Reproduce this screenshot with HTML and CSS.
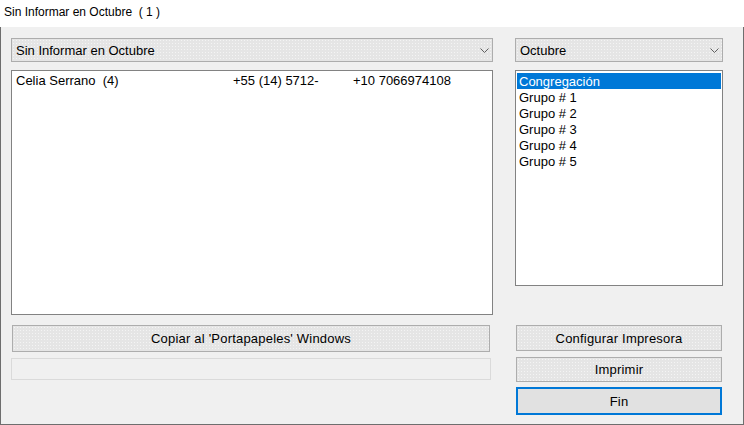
FILE: index.html
```html
<!DOCTYPE html>
<html lang="es">
<head>
    <meta charset="UTF-8">
    <title>Sin Informar en Octubre</title>
    <link rel="stylesheet" href="styles.css">
</head>
<body>
    <div class="window">
        <div class="titlebar">Sin Informar en Octubre  ( 1 )</div>
        <div class="content">
            <div class="col-left">
                <div class="combo">
                    <span>Sin Informar en Octubre</span>
                    <svg class="chev" width="9" height="5" viewBox="0 0 9 5"><path d="M0.5 0.5 L4.5 4.5 L8.5 0.5" fill="none" stroke="#606060" stroke-width="1"/></svg>
                </div>
                <div class="listbox main-list">
                    <div class="row">
                        <span class="c-name">Celia Serrano  (4)</span>
                        <span class="c-tel">+55 (14) 5712-</span>
                        <span class="c-cel">+10 7066974108</span>
                    </div>
                </div>
                <button class="btn btn-copy">Copiar al 'Portapapeles' Windows</button>
                <div class="progress"></div>
            </div>
            <div class="col-right">
                <div class="combo">
                    <span>Octubre</span>
                    <svg class="chev" width="9" height="5" viewBox="0 0 9 5"><path d="M0.5 0.5 L4.5 4.5 L8.5 0.5" fill="none" stroke="#606060" stroke-width="1"/></svg>
                </div>
                <div class="listbox group-list">
                    <div class="item selected">Congregación</div>
                    <div class="item">Grupo # 1</div>
                    <div class="item">Grupo # 2</div>
                    <div class="item">Grupo # 3</div>
                    <div class="item">Grupo # 4</div>
                    <div class="item">Grupo # 5</div>
                </div>
                <div class="buttons">
                    <button class="btn btn-config">Configurar Impresora</button>
                    <button class="btn btn-print">Imprimir</button>
                    <button class="btn btn-fin">Fin</button>
                </div>
            </div>
        </div>
    </div>
</body>
</html>
```

FILE: styles.css
```css
* {
    box-sizing: border-box;
}
body {
    margin: 0;
    width: 744px;
    height: 425px;
    overflow: hidden;
    font-family: "Liberation Sans", Arial, sans-serif;
    font-size: 13px;
    color: #000;
    background: #fff;
}
.window {
    width: 744px;
    height: 425px;
    display: flex;
    flex-direction: column;
}
.titlebar {
    height: 27px;
    background: #fff;
    padding: 5px 0 0 4px;
    font-size: 12px;
    white-space: pre;
}
.content {
    flex: 1;
    background: #f0f0f0;
    border-left: 1px solid #6e6e6e;
    border-right: 1px solid #6e6e6e;
    border-bottom: 1px solid #6e6e6e;
    padding: 11px 20px 0 10px;
    display: flex;
    gap: 22px;
}
.col-left {
    width: 482px;
    display: flex;
    flex-direction: column;
}
.col-right {
    width: 208px;
    display: flex;
    flex-direction: column;
}
.combo {
    height: 24px;
    border: 1px solid #adadad;
    background-color: #e5e5e5;
    background-image: radial-gradient(circle, #f4f4f4 0.6px, transparent 0.9px);
    background-size: 3px 3px;
    display: flex;
    align-items: center;
    justify-content: space-between;
    padding: 0 3px 0 4px;
    white-space: pre;
}
.chev {
    display: block;
    margin-top: 1px;
}
.listbox {
    margin-top: 8px;
    background: #fff;
    border: 1px solid #828282;
    padding: 2px 1px;
}
.main-list {
    height: 245px;
}
.group-list {
    height: 216px;
    padding-top: 2px;
}
.row {
    display: flex;
    height: 16px;
    line-height: 16px;
    padding-left: 3px;
    white-space: pre;
}
.c-name {
    width: 217px;
}
.c-tel {
    width: 120px;
}
.item {
    height: 16px;
    line-height: 17px;
    padding-left: 2px;
}
.item.selected {
    background: #0078d7;
    color: #fff;
}
.btn {
    font-family: inherit;
    font-size: 13px;
    letter-spacing: 0.2px;
    color: #000;
    border: 1px solid #adadad;
    background-color: #e5e5e5;
    background-image: radial-gradient(circle, #f4f4f4 0.6px, transparent 0.9px);
    background-size: 3px 3px;
    padding: 0;
    margin: 0;
}
.btn-copy {
    margin: 10px 3px 0 1px;
    height: 27px;
}
.progress {
    margin: 6px 2px 0 0;
    height: 22px;
    border: 1px solid #dadada;
}
.buttons {
    margin-top: 39px;
    padding: 0 1px;
    display: flex;
    flex-direction: column;
}
.btn-config {
    height: 26px;
}
.btn-print {
    height: 25px;
    margin-top: 6px;
}
.btn-fin {
    height: 28px;
    margin-top: 5px;
    border: 2px solid #0078d7;
    background: #e1e1e1;
}
```
